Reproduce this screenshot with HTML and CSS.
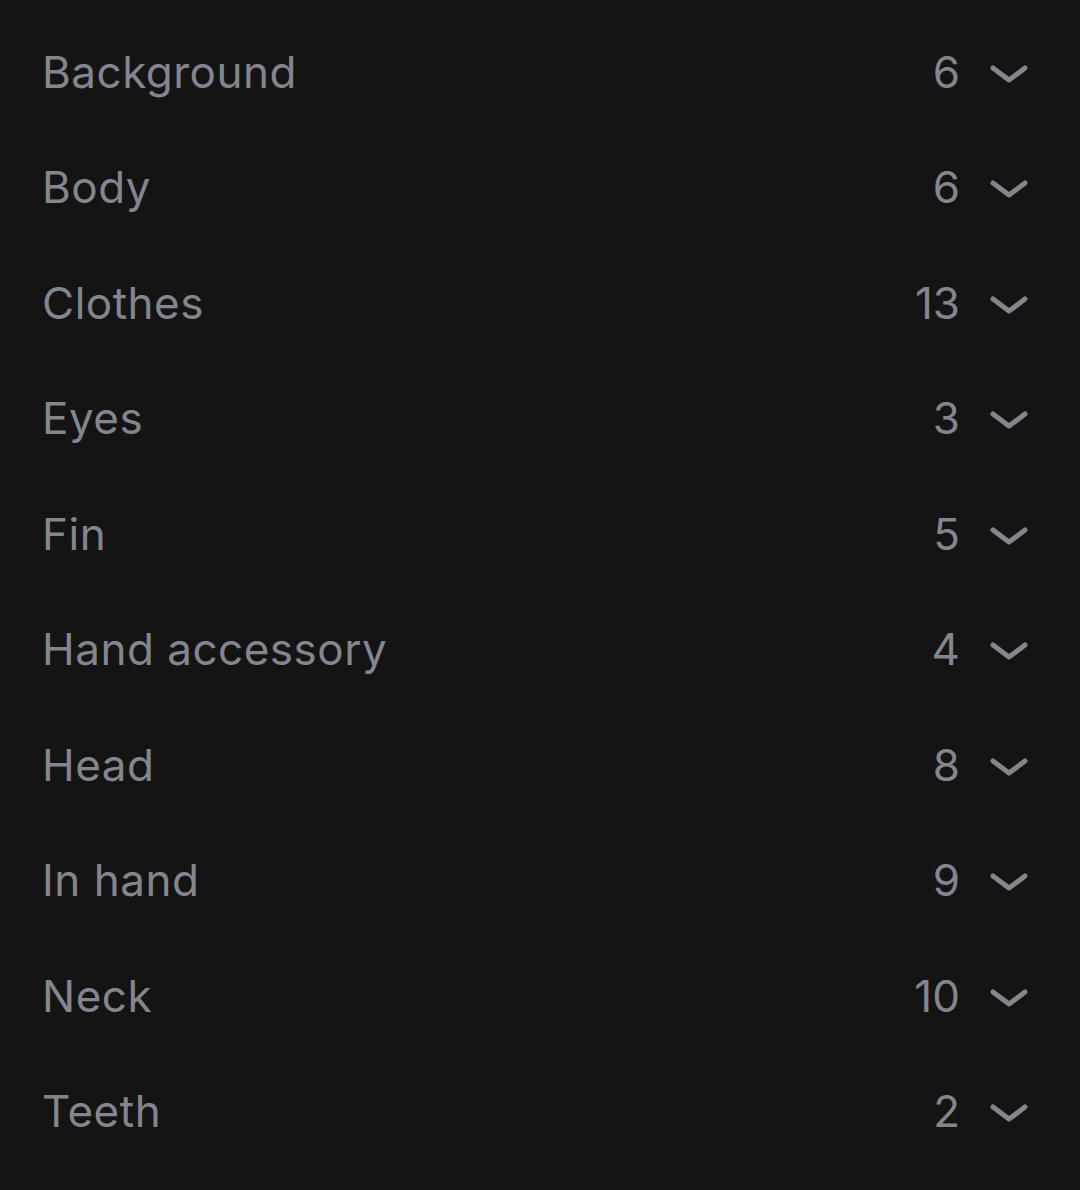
FILE: index.html
```html
<!DOCTYPE html>
<html>
<head>
<meta charset="utf-8">
<link rel="stylesheet" href="styles.css">
</head>
<body>
<ul class="list">
  <li class="row"><span class="name">Background</span><span class="meta"><span class="count">6</span><svg class="chev" viewBox="0 0 40 20"><path d="M4 4 L20 16 L36 4"/></svg></span></li>
  <li class="row"><span class="name">Body</span><span class="meta"><span class="count">6</span><svg class="chev" viewBox="0 0 40 20"><path d="M4 4 L20 16 L36 4"/></svg></span></li>
  <li class="row"><span class="name">Clothes</span><span class="meta"><span class="count">13</span><svg class="chev" viewBox="0 0 40 20"><path d="M4 4 L20 16 L36 4"/></svg></span></li>
  <li class="row"><span class="name">Eyes</span><span class="meta"><span class="count">3</span><svg class="chev" viewBox="0 0 40 20"><path d="M4 4 L20 16 L36 4"/></svg></span></li>
  <li class="row"><span class="name">Fin</span><span class="meta"><span class="count">5</span><svg class="chev" viewBox="0 0 40 20"><path d="M4 4 L20 16 L36 4"/></svg></span></li>
  <li class="row"><span class="name">Hand accessory</span><span class="meta"><span class="count">4</span><svg class="chev" viewBox="0 0 40 20"><path d="M4 4 L20 16 L36 4"/></svg></span></li>
  <li class="row"><span class="name">Head</span><span class="meta"><span class="count">8</span><svg class="chev" viewBox="0 0 40 20"><path d="M4 4 L20 16 L36 4"/></svg></span></li>
  <li class="row"><span class="name">In hand</span><span class="meta"><span class="count">9</span><svg class="chev" viewBox="0 0 40 20"><path d="M4 4 L20 16 L36 4"/></svg></span></li>
  <li class="row"><span class="name">Neck</span><span class="meta"><span class="count">10</span><svg class="chev" viewBox="0 0 40 20"><path d="M4 4 L20 16 L36 4"/></svg></span></li>
  <li class="row"><span class="name">Teeth</span><span class="meta"><span class="count">2</span><svg class="chev" viewBox="0 0 40 20"><path d="M4 4 L20 16 L36 4"/></svg></span></li>
</ul>
</body>
</html>
```

FILE: styles.css
```css
html, body {
  margin: 0;
  padding: 0;
  background: #141414;
  height: 100%;
}
body {
  font-family: Inter, "Noto Sans", sans-serif;
  color: #85858d;
}
.list {
  list-style: none;
  margin: 0;
  padding: 14px 51px 0 42px;
}
.row {
  height: 115.5px;
  display: flex;
  align-items: center;
  justify-content: space-between;
  font-size: 44px;
  letter-spacing: 0.5px;
}
.meta {
  display: flex;
  align-items: center;
  gap: 29px;
}
.count {
  line-height: 1;
  letter-spacing: 0;
}
.chev {
  width: 40px;
  height: 20px;
  margin-top: 4px;
  fill: none;
  stroke: #85858d;
  stroke-width: 5;
  stroke-linecap: round;
  stroke-linejoin: round;
}
```
